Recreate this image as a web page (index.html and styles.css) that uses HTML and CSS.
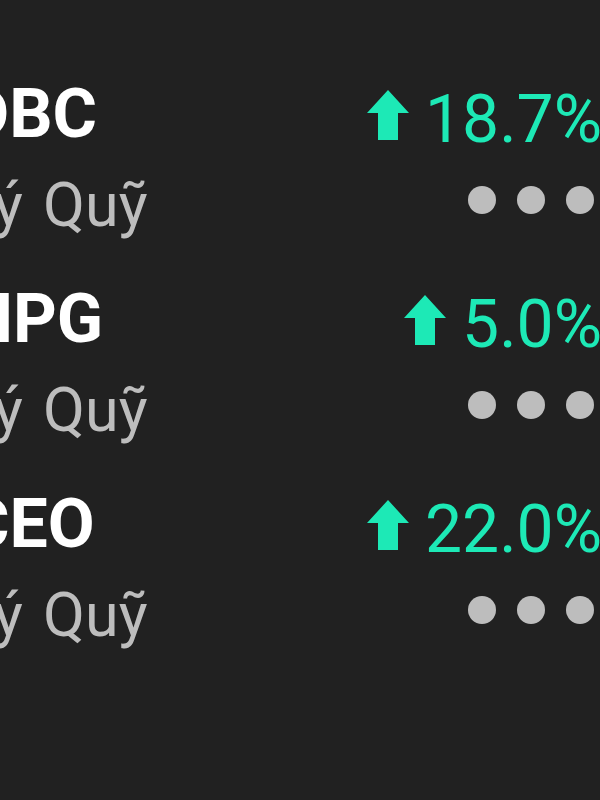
FILE: index.html
```html
<!DOCTYPE html>
<html lang="vi">
<head>
<meta charset="utf-8">
<link rel="stylesheet" href="styles.css">
</head>
<body>
<div class="list">
  <div class="item">
    <div class="top">
      <span class="ticker">DBC</span>
      <span class="change"><svg class="arrow" viewBox="0 0 42 50" width="42" height="50"><polygon points="21,0 42,23 31,23 31,50 11,50 11,23 0,23"/></svg>18.7%</span>
    </div>
    <div class="bottom">
      <span class="name">Ký Quỹ</span>
      <span class="more"><i></i><i></i><i></i></span>
    </div>
  </div>
  <div class="item">
    <div class="top">
      <span class="ticker">HPG</span>
      <span class="change"><svg class="arrow" viewBox="0 0 42 50" width="42" height="50"><polygon points="21,0 42,23 31,23 31,50 11,50 11,23 0,23"/></svg>5.0%</span>
    </div>
    <div class="bottom">
      <span class="name">Ký Quỹ</span>
      <span class="more"><i></i><i></i><i></i></span>
    </div>
  </div>
  <div class="item">
    <div class="top">
      <span class="ticker">CEO</span>
      <span class="change"><svg class="arrow" viewBox="0 0 42 50" width="42" height="50"><polygon points="21,0 42,23 31,23 31,50 11,50 11,23 0,23"/></svg>22.0%</span>
    </div>
    <div class="bottom">
      <span class="name">Ký Quỹ</span>
      <span class="more"><i></i><i></i><i></i></span>
    </div>
  </div>
</div>
</body>
</html>
```

FILE: styles.css
```css
html, body {
  margin: 0;
  padding: 0;
  background: #212121;
  overflow: hidden;
  width: 600px;
  height: 800px;
}

.list {
  margin-left: -34px;
  width: 636px;
  padding-top: 68px;
  display: flex;
  flex-direction: column;
  gap: 21px;
  font-family: Roboto, "Noto Sans", sans-serif;
}

.item {
  display: flex;
  flex-direction: column;
  gap: 4px;
}

.top, .bottom {
  display: flex;
  justify-content: space-between;
  align-items: flex-start;
  height: 90px;
}

.ticker {
  font-size: 68px;
  font-weight: 700;
  line-height: 92px;
  margin-left: -1px;
  color: #ffffff;
  white-space: nowrap;
}

.change {
  font-size: 66px;
  line-height: 103px;
  color: #1de9b6;
  white-space: nowrap;
}

.arrow {
  fill: #1de9b6;
  vertical-align: 2px;
  margin-right: 16px;
}

.name {
  font-size: 61px;
  line-height: 86px;
  margin-left: -9px;
  word-spacing: 5px;
  color: #bdbdbd;
  white-space: nowrap;
}

.more {
  display: flex;
  gap: 21px;
  margin-top: 24px;
  margin-right: 8px;
}

.more i {
  display: block;
  width: 28px;
  height: 28px;
  border-radius: 50%;
  background: #bdbdbd;
}
```
